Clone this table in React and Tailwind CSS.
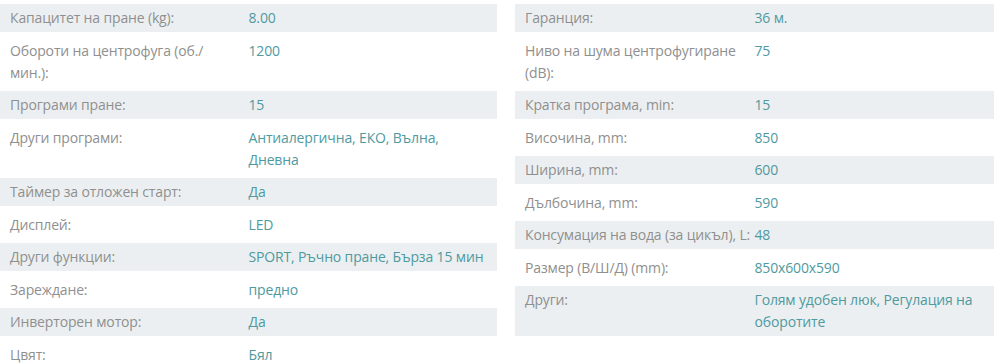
import React from "react";

const left = [
  ["Капацитет на пране (kg):", "8.00"],
  ["Обороти на центрофуга (об./ мин.):", "1200"],
  ["Програми пране:", "15"],
  ["Други програми:", "Антиалергична, ЕКО, Вълна, Дневна"],
  ["Таймер за отложен старт:", "Да"],
  ["Дисплей:", "LED"],
  ["Други функции:", "SPORT, Ръчно пране, Бърза 15 мин"],
  ["Зареждане:", "предно"],
  ["Инверторен мотор:", "Да"],
  ["Цвят:", "Бял"],
];

const right = [
  ["Гаранция:", "36 м."],
  ["Ниво на шума центрофугиране (dB):", "75"],
  ["Кратка програма, min:", "15"],
  ["Височина, mm:", "850"],
  ["Ширина, mm:", "600"],
  ["Дълбочина, mm:", "590"],
  ["Консумация на вода (за цикъл), L:", "48"],
  ["Размер (В/Ш/Д) (mm):", "850x600x590"],
  ["Други:", "Голям удобен люк, Регулация на оборотите"],
];

function Table({ rows, className, labelClass, valueClass }) {
  return (
    <div className={className}>
      {rows.map(([k, v], i) => (
        <div
          key={i}
          className={
            i % 2 === 0
              ? "flex bg-[#eceff1] py-[3px]"
              : "flex bg-white py-[7.5px]"
          }
        >
          <div className={"w-1/2 shrink-0 pl-[10px] text-[#8f8f8f] " + labelClass}>{k}</div>
          <div className={"w-1/2 shrink-0 text-[#4f9a9f] " + valueClass}>{v}</div>
        </div>
      ))}
    </div>
  );
}

export default function App() {
  return (
    <div
      className="flex h-[364px] w-[1000px] gap-[18px] overflow-hidden bg-white pt-[4px] text-[14px] leading-[22px] tracking-[-0.15px]"
      style={{ fontFamily: '"Open Sans", "Liberation Sans", sans-serif' }}
    >
      <Table
        rows={left}
        className="w-[497px] shrink-0"
        labelClass="pr-[20px]"
        valueClass="pr-[9px]"
      />
      <Table
        rows={right}
        className="w-[479px] shrink-0 self-start"
        labelClass="pr-0"
        valueClass="pr-[4px]"
      />
    </div>
  );
}
